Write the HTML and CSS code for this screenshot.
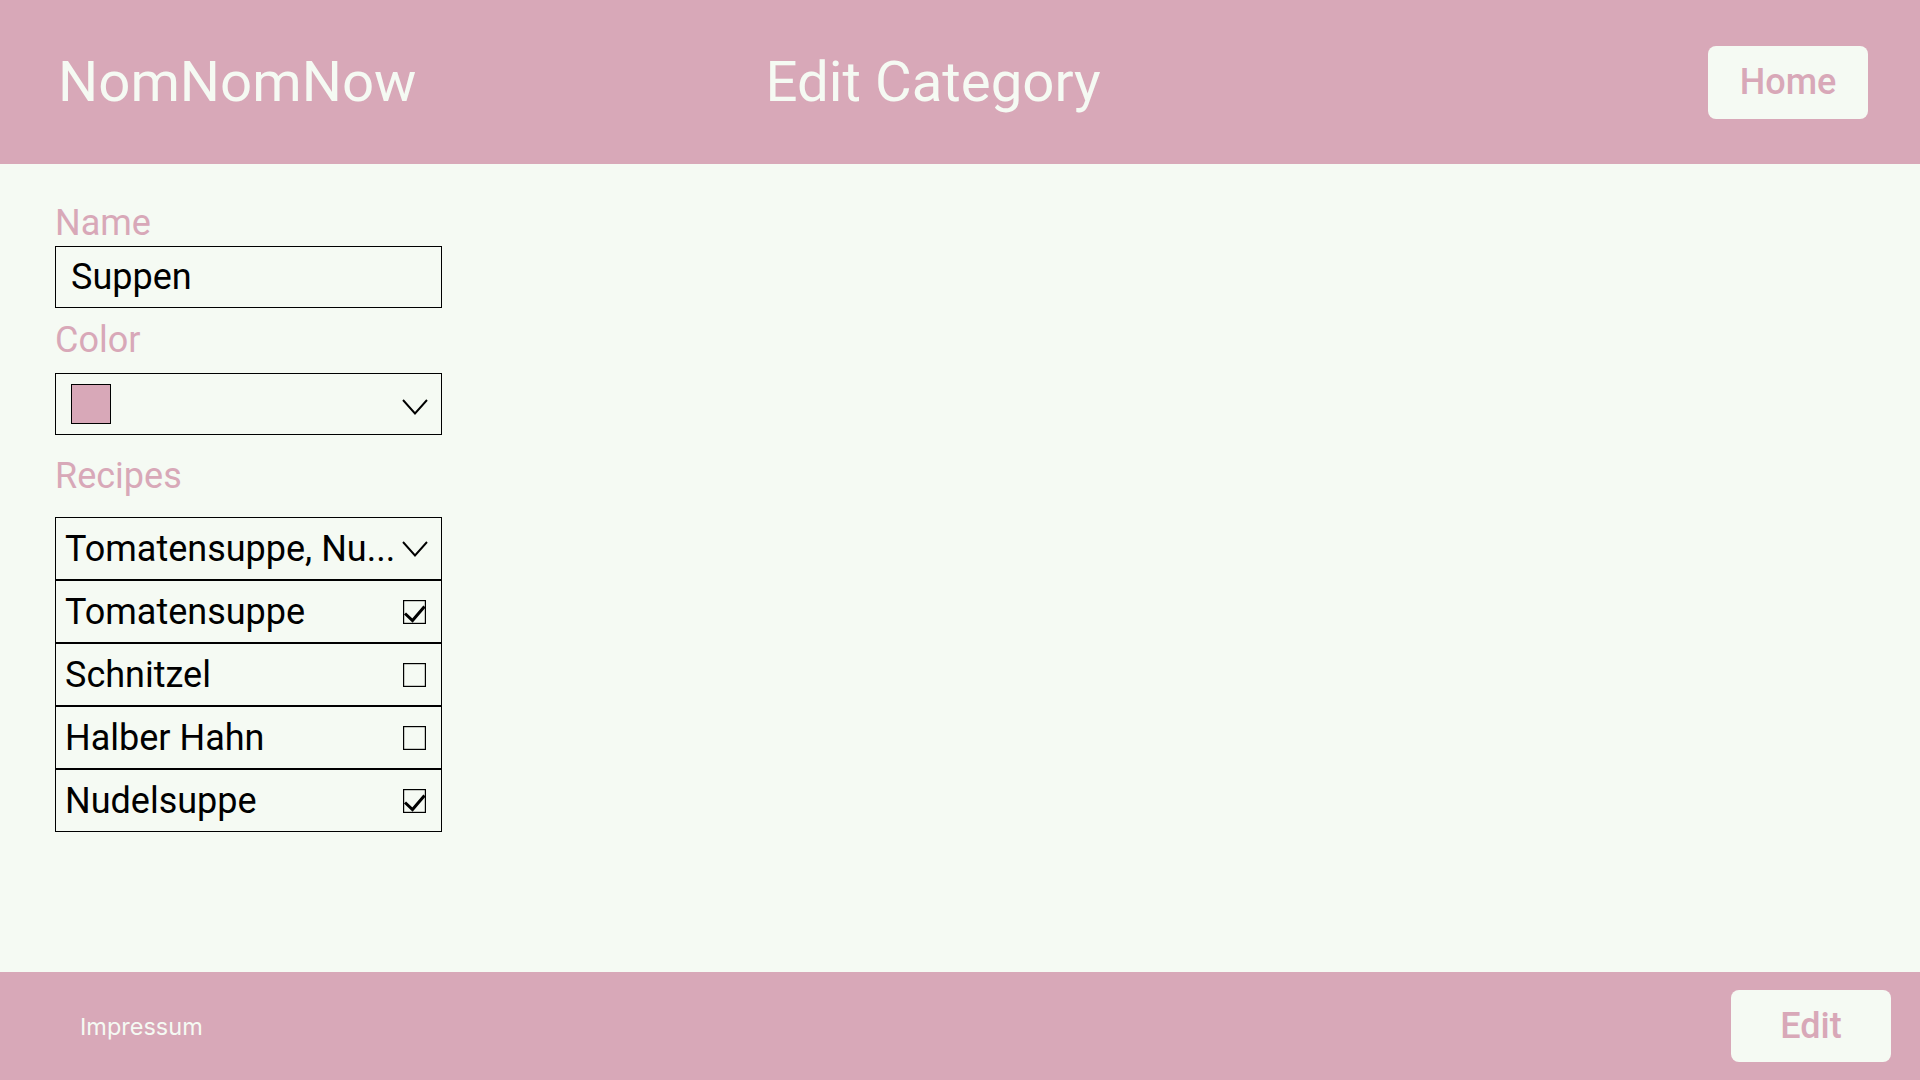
FILE: index.html
```html
<!DOCTYPE html>
<html lang="de">
<head>
<meta charset="utf-8">
<title>Edit Category - NomNomNow</title>
<link rel="stylesheet" href="styles.css">
</head>
<body>
<header class="topbar">
  <div class="logo">NomNomNow</div>
  <h1 class="page-title">Edit Category</h1>
  <button class="btn btn-home">Home</button>
</header>
<main class="content">
  <form class="form">
    <label class="label label-name">Name</label>
    <div class="field text-field">Suppen</div>
    <label class="label label-color">Color</label>
    <div class="field select-field">
      <span class="swatch"></span>
      <svg class="chevron" viewBox="0 0 26 16" width="26" height="16"><path d="M1 1 L13 14.5 L25 1" fill="none" stroke="#000" stroke-width="1.9"/></svg>
    </div>
    <label class="label label-recipes">Recipes</label>
    <div class="multi">
      <div class="row row-head">
        <span class="row-text">Tomatensuppe, Nu...</span>
        <svg class="chevron" viewBox="0 0 26 16" width="26" height="16"><path d="M1 1 L13 14.5 L25 1" fill="none" stroke="#000" stroke-width="1.9"/></svg>
      </div>
      <div class="row">
        <span class="row-text">Tomatensuppe</span>
        <svg class="check" viewBox="0 0 23 24" width="23" height="24"><rect x="0.6" y="0.6" width="21.8" height="22.8" fill="none" stroke="#000" stroke-width="1.2"/><path d="M2 13.5 L9.5 20.5 L21.5 6.5" fill="none" stroke="#000" stroke-width="3"/></svg>
      </div>
      <div class="row">
        <span class="row-text">Schnitzel</span>
        <svg class="check" viewBox="0 0 23 24" width="23" height="24"><rect x="0.6" y="0.6" width="21.8" height="22.8" fill="none" stroke="#000" stroke-width="1.2"/></svg>
      </div>
      <div class="row">
        <span class="row-text">Halber Hahn</span>
        <svg class="check" viewBox="0 0 23 24" width="23" height="24"><rect x="0.6" y="0.6" width="21.8" height="22.8" fill="none" stroke="#000" stroke-width="1.2"/></svg>
      </div>
      <div class="row">
        <span class="row-text">Nudelsuppe</span>
        <svg class="check" viewBox="0 0 23 24" width="23" height="24"><rect x="0.6" y="0.6" width="21.8" height="22.8" fill="none" stroke="#000" stroke-width="1.2"/><path d="M2 13.5 L9.5 20.5 L21.5 6.5" fill="none" stroke="#000" stroke-width="3"/></svg>
      </div>
    </div>
  </form>
</main>
<footer class="footer">
  <a class="impressum">Impressum</a>
  <button class="btn btn-edit">Edit</button>
</footer>
</body>
</html>
```
FILE: styles.css
```css
* { box-sizing: border-box; }

html, body {
  margin: 0;
  padding: 0;
}

body {
  width: 1920px;
  height: 1080px;
  display: flex;
  flex-direction: column;
  background: #f5faf3;
  font-family: Roboto, "Noto Sans", sans-serif;
  color: #000;
}

.topbar {
  height: 164px;
  flex: 0 0 164px;
  background: #d8a8b8;
  display: flex;
  align-items: center;
  padding: 0 52px 0 58px;
}

.logo {
  font-size: 56.4px;
  color: #f5faf3;
  font-weight: 400;
  line-height: 1;
}

.page-title {
  margin: 0 0 0 349px;
  font-size: 56.4px;
  font-weight: 400;
  color: #f5faf3;
  line-height: 1;
}

.btn {
  font-family: Roboto, sans-serif;
  font-weight: 500;
  font-size: 36px;
  color: #d8a8b8;
  background: #f5faf3;
  border: none;
  border-radius: 8px;
  width: 160px;
  height: 73px;
  padding: 0;
  cursor: pointer;
}

.btn-home {
  margin-left: auto;
}

.content {
  flex: 1;
  padding: 39px 55px 0 55px;
}

.form {
  width: 387px;
  display: flex;
  flex-direction: column;
}

.label {
  display: block;
  font-size: 36px;
  color: #d8a8b8;
  line-height: 41px;
}

.label-name { margin-bottom: 2px; }
.label-color { margin-top: 12px; margin-bottom: 12px; }
.label-recipes { margin-top: 21px; margin-bottom: 20px; }

.field {
  height: 62px;
  border: 1px solid #000;
  display: flex;
  align-items: center;
  font-size: 36px;
}

.text-field {
  padding-left: 15px;
}

.select-field {
  padding: 0 13px 0 15px;
  justify-content: space-between;
}

.swatch {
  width: 40px;
  height: 40px;
  background: #d8a8b8;
  border: 1px solid #000;
}

.chevron {
  display: block;
  margin-top: 5px;
}

.multi {
  display: flex;
  flex-direction: column;
}

.row {
  height: 63px;
  border: 1px solid #000;
  display: flex;
  align-items: center;
  justify-content: space-between;
  padding: 0 15px 0 9px;
  font-size: 36px;
}

.row-head {
  padding-right: 13px;
}

.row-head .chevron {
  margin-top: 0;
}

.row-text {
  white-space: nowrap;
}

.check {
  display: block;
}

.footer {
  height: 108px;
  flex: 0 0 108px;
  background: #d8a8b8;
  display: flex;
  align-items: center;
  justify-content: space-between;
  padding: 0 29px 0 80px;
}

.impressum {
  font-family: Inter, Roboto, sans-serif;
  font-size: 23.5px;
  color: #f5faf3;
  text-decoration: none;
}

.btn-edit {
  height: 72px;
}
```
